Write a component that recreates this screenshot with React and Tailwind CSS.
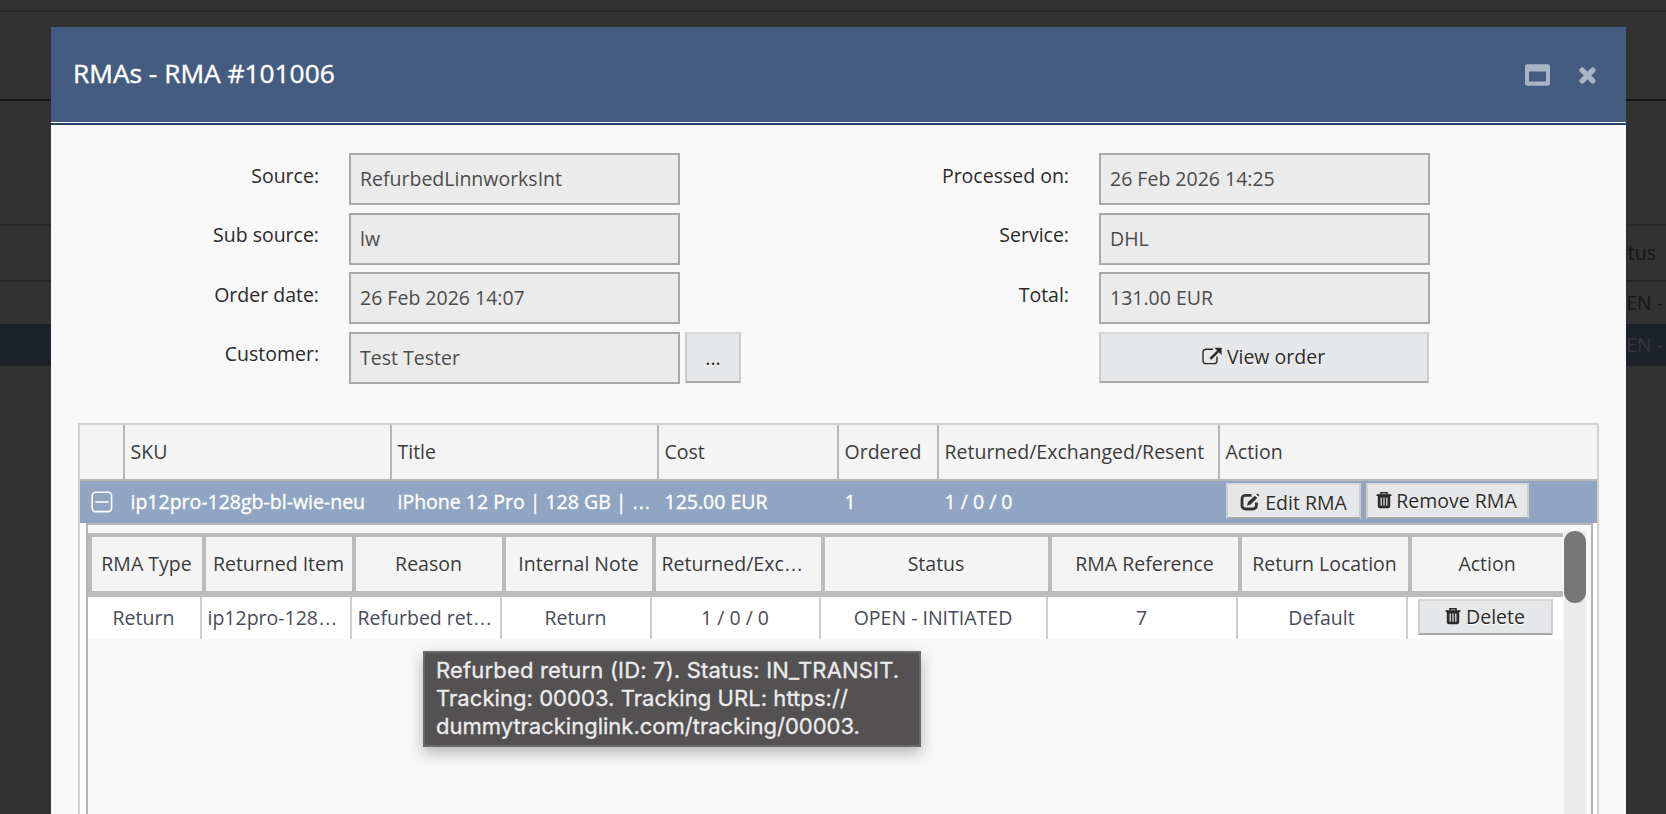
const leftFields = [
  { label: 'Source:', value: 'RefurbedLinnworksInt' },
  { label: 'Sub source:', value: 'lw' },
  { label: 'Order date:', value: '26 Feb 2026 14:07' },
  { label: 'Customer:', value: 'Test Tester', more: true },
];

const rightFields = [
  { label: 'Processed on:', value: '26 Feb 2026 14:25' },
  { label: 'Service:', value: 'DHL' },
  { label: 'Total:', value: '131.00 EUR' },
];

const itemColumns = [
  { title: '', width: 'w-[45px]' },
  { title: 'SKU', width: 'w-[267px]', value: 'ip12pro-128gb-bl-wie-neu' },
  { title: 'Title', width: 'w-[267px]', value: 'iPhone 12 Pro | 128 GB | …' },
  { title: 'Cost', width: 'w-[180px]', value: '125.00 EUR' },
  { title: 'Ordered', width: 'w-[100px]', value: '1' },
  { title: 'Returned/Exchanged/Resent', width: 'w-[281px]', value: '1 / 0 / 0' },
];

const rmaColumns = [
  { title: 'RMA Type', width: 'w-[114px]', value: 'Return' },
  { title: 'Returned Item', width: 'w-[150px]', value: 'ip12pro-128…' },
  { title: 'Reason', width: 'w-[150px]', value: 'Refurbed ret…' },
  { title: 'Internal Note', width: 'w-[150px]', value: 'Return' },
  { title: 'Returned/Exc…', width: 'w-[169px]', value: '1 / 0 / 0' },
  { title: 'Status', width: 'w-[227px]', value: 'OPEN - INITIATED' },
  { title: 'RMA Reference', width: 'w-[190px]', value: '7' },
  { title: 'Return Location', width: 'w-[170px]', value: 'Default' },
];

// Clipped texts fill their cell from the left, the others are centred
const cellAlign = (text) => (text.endsWith('…') ? 'justify-start pl-[5.5px]' : 'justify-center pr-px');

const CellText = ({ text }) => (
  <span className="whitespace-pre">
    {text.replace('…', '')}
    {text.endsWith('…') && <span className="font-['Liberation_Sans',sans-serif] leading-none">…</span>}
  </span>
);

const buttonClass =
  'flex items-center justify-center border-2 border-t-[#d9d9d9] border-x-[#cdcdcd] border-b-[#a8a8a8] bg-[#e6e7e8] text-[#2b2b2b] [text-shadow:0_1px_1px_#fff] whitespace-nowrap';

const TrashIcon = () => (
  <svg width="16" height="18" viewBox="0 0 16 18" className="shrink-0">
    <path d="M5 3.4V1.7h6v1.7" fill="none" stroke="#2b2b2b" strokeWidth="1.6" />
    <path d="M0.6 4.1h14.8" stroke="#2b2b2b" strokeWidth="1.8" />
    <path d="M1.8 5h12.4v10q0 2.2-2.2 2.2H4q-2.2 0-2.2-2.2z" fill="#2b2b2b" />
    <path d="M5.2 6.4v8.4M8 6.4v8.4M10.8 6.4v8.4" stroke="#e0e1e2" strokeWidth="1.3" />
  </svg>
);

const EditIcon = () => (
  <svg width="20" height="18" viewBox="0 0 20 18" className="shrink-0">
    <path d="M11.5 2.4H6Q2 2.4 2 6.2v6Q2 16 6 16h6.4q4 0 4-3.8V9.4" fill="none" stroke="#333" strokeWidth="2.8" />
    <path d="M7 12.8l1-3.8L14.8 2.8l2.4 2.3-6.6 6.4z" fill="#333" />
    <path d="M16.4 1.6l1.2-1.2 1.8 1.8-1.2 1.2z" fill="#333" />
  </svg>
);

const ExternalIcon = () => (
  <svg width="20" height="18" viewBox="0 0 20 18" className="shrink-0">
    <path d="M11 2.2H4.2Q1 2.2 1 5.4v8q0 3.2 3.2 3.2h7.6q3.2 0 3.2-3.2V9.5" fill="none" stroke="#2b2b2b" strokeWidth="1.4" />
    <path d="M8.4 11.8L16.5 3.8" stroke="#2b2b2b" strokeWidth="2.6" />
    <path d="M12.4 0.8H19.6V8z" fill="#2b2b2b" />
  </svg>
);

const Field = ({ label, value, more }) => (
  <div className="flex h-[59.6px] items-start">
    <div className="mt-[8.5px] w-[268px] text-right text-[#2b2b2b]">{label}</div>
    <div className="ml-[30px] flex h-[52px] w-[331px] items-center border-2 border-[#a9a9a9] bg-[#ebebeb] pb-[1.1px] pl-[9px] text-[#4c4c4c]">
      {value}
    </div>
    {more && <button className={`${buttonClass} ml-[5px] h-[51px] w-14`}>...</button>}
  </div>
);

// Page behind the modal, already dimmed
const Backdrop = () => (
  <div className="h-full">
    <div className="h-3 border-b-2 border-[#292929]" />
    <div className="h-[89px] border-b-2 border-[#13171b]" />
    <div className="h-[125px] border-b-2 border-[#2a2a2a]" />
    <div className="flex h-14 items-center justify-end border-b-2 border-[#272727] pr-[10px] pb-0.5 text-[#151515]">Status</div>
    <div className="flex h-[42px] items-center justify-end pr-[3px] pb-0.5 text-[#151719]">OPEN -</div>
    <div className="flex h-[42px] items-center justify-end bg-[#1c212a] pr-[3px] pb-0.5 text-[#373737]">OPEN -</div>
  </div>
);

const RmaTable = () => (
  <div className="w-[1475px]">
    <div className="flex h-16 border-4 border-r-0 border-b-[6px] border-[#bcbcbc] bg-[#f4f4f4]">
      {rmaColumns.map((col) => (
        <div
          key={col.title}
          className={`${col.width} ${cellAlign(col.title)} flex shrink-0 items-center border-r-4 border-[#bcbcbc] pb-0.5 text-[#3c3c3c]`}
        >
          <CellText text={col.title} />
        </div>
      ))}
      <div className="flex grow items-center justify-center pr-px pb-0.5 text-[#3c3c3c]">Action</div>
    </div>
    <div className="flex h-[42px] bg-white text-[#484c5a]">
      {rmaColumns.map((col) => (
        <div
          key={col.title}
          className={`${col.width} ${cellAlign(col.value)} flex shrink-0 items-center border-r-2 border-[#cdcdcd] pb-0.5`}
        >
          <CellText text={col.value} />
        </div>
      ))}
      <div className="flex grow justify-center pt-0.5">
        <button className={`${buttonClass} h-9 w-[135px] gap-[5px] pr-px pb-0.5`}>
          <TrashIcon />
          Delete
        </button>
      </div>
    </div>
  </div>
);

const ItemTable = () => (
  <div className="mx-[27px] grow border-2 border-b-0 border-[#d2d2d2] bg-white">
    <div className="flex h-14 border-b-2 border-[#b7b7b7] bg-[#f4f4f4] text-[#3c3c3c]">
      {itemColumns.map((col) => (
        <div key={col.title} className={`${col.width} flex shrink-0 items-center border-r-2 border-[#b7b7b7] pb-0.5 pl-[5.5px]`}>
          {col.title}
        </div>
      ))}
      <div className="flex items-center pb-0.5 pl-[5.5px]">Action</div>
    </div>
    <div className="flex h-[42px] bg-[#8fa5c2] text-white">
      {itemColumns.map((col, i) => (
        <div
          key={col.title}
          className={`${col.width} flex shrink-0 items-center pb-0.5 pl-[5.5px] whitespace-nowrap [-webkit-text-stroke:0.35px_#fff]`}
        >
          {i === 0 ? (
            <svg width="22" height="22" viewBox="0 0 22 22" className="mt-0.5 ml-[5px]" fill="none" stroke="#fff">
              <rect x="1.2" y="1.2" width="19.4" height="19.4" rx="3.5" strokeWidth="1.6" />
              <path d="M4.5 11h13" strokeWidth="1.6" />
            </svg>
          ) : (
            <CellText text={col.value} />
          )}
        </div>
      ))}
      <div className="flex gap-[5px] pt-0.5 pl-1.5">
        <button className={`${buttonClass} h-9 w-[135px] gap-[5px] pt-0.5`}>
          <EditIcon />
          Edit RMA
        </button>
        <button className={`${buttonClass} h-9 w-[163px] gap-1 pr-0.5 pb-0.5`}>
          <TrashIcon />
          Remove RMA
        </button>
      </div>
    </div>
    <div className="mr-1 ml-1.5 flex h-full border-2 border-[#b4b4b4] bg-[#f8f8f8] pt-2">
      <RmaTable />
      <div className="-mt-0.5 ml-px w-[22px] bg-[#ebebeb]">
        <div className="h-[72px] rounded-full bg-[#777]" />
      </div>
    </div>
  </div>
);

export default function App() {
  return (
    <div className="relative h-[814px] w-[1666px] overflow-hidden bg-[#323232] font-['Open_Sans',sans-serif] text-[19.5px] leading-[27px]">
      <Backdrop />

      <div className="absolute top-[27px] left-[51px] flex h-[787px] w-[1575px] flex-col overflow-hidden bg-[#f8f8f8]">
        <div className="flex h-[95px] shrink-0 items-center bg-[#435c80] pr-[30px] pl-[22px]">
          <h1 className="grow pb-0.5 text-[26.3px] text-white [-webkit-text-stroke:0.4px_#fff]">RMAs - RMA #101006</h1>
          <svg width="25" height="22" viewBox="0 0 25 22">
            <path fillRule="evenodd" fill="#a9b4c5" d="M2.5 0.2h20q2.5 0 2.5 2.5v16.5q0 2.5-2.5 2.5h-20q-2.5 0-2.5-2.5v-16.5q0-2.5 2.5-2.5zM4 7.5v10h17v-10z" />
          </svg>
          <svg width="17" height="17" viewBox="0 0 17 17" className="mt-0.5 ml-[29px]">
            <path d="M3.2 3.2l10.6 10.6M13.8 3.2L3.2 13.8" stroke="#a9b4c5" strokeWidth="5.4" strokeLinecap="round" />
          </svg>
        </div>
        <div className="h-[3px] shrink-0 border-t border-white bg-[#28436b]" />

        <div className="flex h-[298px] shrink-0 pt-7">
          <div className="w-[750px]">
            {leftFields.map((f) => (
              <Field key={f.label} {...f} />
            ))}
          </div>
          <div>
            {rightFields.map((f) => (
              <Field key={f.label} {...f} />
            ))}
            <button className={`${buttonClass} ml-[298px] h-[51px] w-[330px] gap-[5px] pr-px pb-0.5`}>
              <ExternalIcon />
              View order
            </button>
          </div>
        </div>

        <ItemTable />
      </div>

      {/* Reason cell tooltip */}
      <div className="absolute top-[651px] left-[423px] h-24 w-[498px] border-2 border-[#6b696a] bg-[#535152] pt-[3px] pl-[11px] font-['Inter',sans-serif] text-[22px] leading-7 whitespace-nowrap text-[#ececec] shadow-[0_6px_14px_rgba(0,0,0,0.28)] [-webkit-text-stroke:0.3px_#ececec]">
        <div className="tracking-[0.17px]">Refurbed return (ID: 7). Status: IN_TRANSIT.</div>
        <div className="tracking-[0.06px]">Tracking: 00003. Tracking URL: https://</div>
        <div>dummytrackinglink.com/tracking/00003.</div>
      </div>
    </div>
  );
}
